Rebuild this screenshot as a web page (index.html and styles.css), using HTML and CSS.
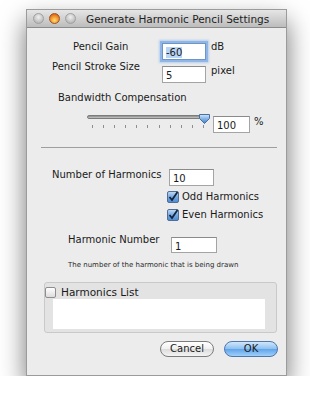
FILE: index.html
```html
<!DOCTYPE html>
<html>
	<head>
		<meta charset="utf-8">
		<title>Generate Harmonic Pencil Settings</title>
		<link rel="stylesheet" href="styles.css">
	</head>
	<body>
		<div class="window">
			<!-- title bar -->
			<div class="titlebar">
				<div class="lights">
					<span class="light"></span>
					<span class="light close"></span>
					<span class="light"></span>
				</div>
				<div class="title">Generate Harmonic Pencil Settings</div>
			</div>

			<div class="row r-gain">
				<div class="lbl l-gain">Pencil Gain</div>
				<div class="field f-gain focus"><span class="sel">-60</span></div>
				<div class="unit u-db">dB</div>
			</div>
			<div class="row r-stroke">
				<div class="lbl l-stroke">Pencil Stroke Size</div>
				<div class="field f-stroke">5</div>
				<div class="unit u-px">pixel</div>
			</div>
			<div class="row r-bw">
				<div class="lbl l-bw">Bandwidth Compensation</div>
			</div>
			<div class="row r-slider">
				<div class="slider">
					<div class="track"></div>
					<svg class="knob" width="13" height="12" viewBox="0 0 13 12">
						<defs>
							<linearGradient id="kg" x1="0" y1="0" x2="0" y2="1">
								<stop offset="0" stop-color="#d4e6f8"/>
								<stop offset="0.5" stop-color="#7fb0e6"/>
								<stop offset="1" stop-color="#3f7fcf"/>
							</linearGradient>
						</defs>
						<path d="M1.5 1.5 h10 v4 l-5 5 l-5 -5 z" fill="url(#kg)" stroke="#4a6f9e" stroke-width="1" stroke-linejoin="round"/>
					</svg>
					<div class="ticks">
						<i></i><i></i><i></i><i></i><i></i><i></i><i></i><i></i><i></i><i></i><i></i>
					</div>
				</div>
				<div class="field f-pct">100</div>
				<div class="unit u-pct">%</div>
			</div>

			<div class="sep"></div>

			<div class="row r-num">
				<div class="lbl l-num">Number of Harmonics</div>
				<div class="field f-num">10</div>
			</div>
			<div class="row r-odd">
				<svg class="check" width="12" height="12" viewBox="0 0 12 12">
					<defs>
						<linearGradient id="cg" x1="0" y1="0" x2="0" y2="1">
							<stop offset="0" stop-color="#c3dcf5"/>
							<stop offset="0.5" stop-color="#76a9e2"/>
							<stop offset="1" stop-color="#4b8ad6"/>
						</linearGradient>
					</defs>
					<rect x="0.5" y="0.5" width="11" height="11" rx="1.5" fill="url(#cg)" stroke="#4f6f96"/>
					<path d="M2.5 6 L5 9 L10.5 1" fill="none" stroke="#15243a" stroke-width="1.8"/>
				</svg>
				<span class="ctext">Odd Harmonics</span>
			</div>
			<div class="row r-even">
				<svg class="check" width="12" height="12" viewBox="0 0 12 12">
					<rect x="0.5" y="0.5" width="11" height="11" rx="1.5" fill="url(#cg)" stroke="#4f6f96"/>
					<path d="M2.5 6 L5 9 L10.5 1" fill="none" stroke="#15243a" stroke-width="1.8"/>
				</svg>
				<span class="ctext">Even Harmonics</span>
			</div>

			<div class="row r-hn">
				<div class="lbl l-hn">Harmonic Number</div>
				<div class="field f-hn">1</div>
			</div>
			<div class="note">The number of the harmonic that is being drawn</div>

			<!-- harmonics list box -->
			<div class="group">
				<div class="ghead">
					<span class="box"></span>
					<span class="gtext">Harmonics List</span>
				</div>
				<div class="list"></div>
			</div>

			<div class="buttons">
				<div class="btn">Cancel</div>
				<div class="btn ok">OK</div>
			</div>
		</div>
	</body>
</html>
```

FILE: styles.css
```css
* {
	margin: 0;
	padding: 0;
	box-sizing: border-box;
}
body {
	background: #fff;
	font-family: "DejaVu Sans", "Liberation Sans", sans-serif;
	font-size: 10px;
	color: #1a1a1a;
}
.window {
	width: 261px;
	height: 367px;
	margin: 9px 0 0 26px;
	background: #ececec;
	border: 1px solid #9b9b9b;
	box-shadow: 0 12px 24px rgba(0, 0, 0, 0.55);
}
.titlebar {
	height: 18px;
	display: flex;
	align-items: center;
	background: linear-gradient(#e6e6e6, #bcbcbc);
	border-bottom: 1px solid #8c8c8c;
}
.lights {
	display: flex;
	gap: 5px;
	margin-left: 6px;
}
.light {
	width: 11px;
	height: 11px;
	border-radius: 50%;
	background: radial-gradient(circle at 50% 35%, #f0f0f0, #c4c4c4 60%, #a8a8a8);
	border: 1px solid #a0a0a0;
}
.light.close {
	background: radial-gradient(circle at 50% 70%, #ffe070, #f08c2a 55%, #c8461a);
	border-color: #a0521e;
}
.title {
	margin-left: 10px;
	font-size: 10.5px;
	color: #1e1e1e;
}
.row {
	display: flex;
	align-items: flex-start;
}
.lbl {
	line-height: 12px;
}
.field {
	height: 17px;
	background: #fff;
	border: 1px solid #a4a4a4;
	border-top-color: #8a8a8a;
	padding: 3px 0 0 3px;
	line-height: 12px;
}
.unit {
	margin-left: 5px;
	line-height: 12px;
}
.r-gain {
	margin-top: 15px;
}
.l-gain {
	width: 135px;
	padding-left: 46px;
	margin-top: -2px;
}
.f-gain {
	width: 44px;
}
.focus {
	box-shadow: 0 0 0 2px #8fb6e6, 0 0 2px 3px #b4cfee;
	border-color: #6f95c4;
}
.sel {
	background: #b8d4f6;
}
.u-db {
	margin-top: -2px;
}
.r-stroke {
	margin-top: 6px;
}
.l-stroke {
	width: 135px;
	padding-left: 25px;
	margin-top: -5px;
}
.f-stroke {
	width: 44px;
}
.u-px {
	margin-top: -1px;
}
.r-bw {
	margin-top: 9px;
}
.l-bw {
	padding-left: 31px;
}
.r-slider {
	margin-top: 9px;
}
.slider {
	width: 121px;
	margin-left: 60px;
	height: 20px;
	position: relative;
}
.track {
	margin-top: 2px;
	width: 118px;
	height: 4px;
	border-radius: 2px;
	background: linear-gradient(#8a8a8a, #c8c8c8);
	border: 1px solid #7c7c7c;
}
.knob {
	position: absolute;
	left: 111px;
	top: 0;
}
.ticks {
	display: flex;
	justify-content: space-between;
	width: 112px;
	margin: 6px 0 0 5px;
}
.ticks i {
	width: 1px;
	height: 3px;
	background: #8e8e8e;
}
.f-pct {
	width: 37px;
	margin: 3px 0 0 5px;
}
.u-pct {
	margin-top: 3px;
	margin-left: 4px;
}
.sep {
	margin: 14px 0 0 14px;
	width: 236px;
	height: 1px;
	background: #9e9e9e;
}
.r-num {
	margin-top: 21px;
}
.l-num {
	width: 142px;
	padding-left: 25px;
}
.f-num {
	width: 45px;
}
.r-odd {
	margin-top: 5px;
	padding-left: 140px;
	align-items: center;
}
.r-even {
	margin-top: 6px;
	padding-left: 140px;
	align-items: center;
}
.ctext {
	margin-left: 3px;
	line-height: 12px;
}
.r-hn {
	margin-top: 16px;
}
.l-hn {
	width: 144px;
	padding-left: 41px;
	margin-top: -3px;
}
.f-hn {
	width: 46px;
	height: 16px;
}
.note {
	margin: 7px 0 0 41px;
	font-size: 7px;
	line-height: 10px;
	color: #2a2a2a;
}
.group {
	margin: 12px 0 0 17px;
	width: 233px;
	height: 51px;
	background: #e3e3e3;
	border: 1px solid #c9c9c9;
	border-radius: 3px;
}
.ghead {
	display: flex;
	align-items: center;
	margin-top: 3px;
}
.box {
	width: 11px;
	height: 11px;
	background: linear-gradient(#ffffff, #dcdcdc);
	border: 1px solid #8e8e8e;
	border-radius: 2px;
}
.gtext {
	margin-left: 5px;
	font-size: 10.5px;
	line-height: 12px;
}
.list {
	margin: 1px 0 0 8px;
	width: 212px;
	height: 30px;
	background: #fff;
}
.buttons {
	display: flex;
	justify-content: flex-end;
	gap: 10px;
	margin: 8px 8px 0 0;
}
.btn {
	width: 54px;
	height: 16px;
	border-radius: 8px;
	border: 1px solid #7c7c7c;
	background: linear-gradient(#ffffff, #f0f0f0 50%, #dcdcdc 51%, #f4f4f4);
	text-align: center;
	line-height: 14px;
	font-size: 10px;
}
.btn.ok {
	border-color: #4d77ad;
	background: linear-gradient(#d0e6fb, #8cc0f0 50%, #5fa3ea 51%, #9fd0fa);
}
```
